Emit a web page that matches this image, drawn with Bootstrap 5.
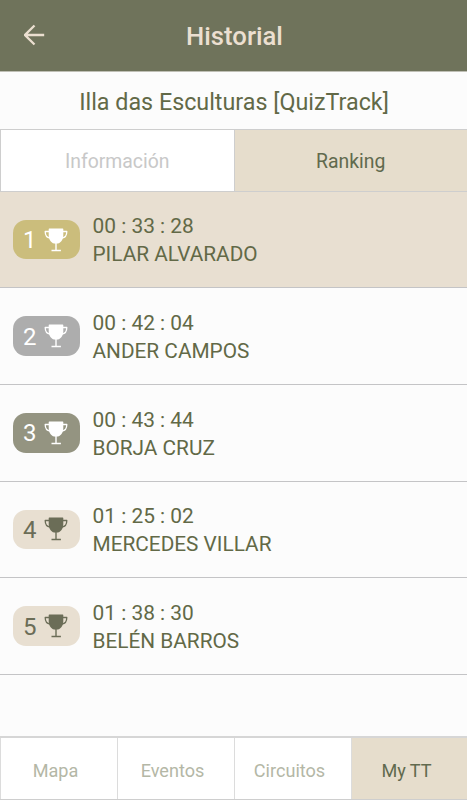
<!DOCTYPE html>
<html lang="es">
<head>
<meta charset="utf-8">
<meta name="viewport" content="width=device-width, initial-scale=1">
<title>Historial</title>
<link href="https://cdn.jsdelivr.net/npm/bootstrap@5.3.0/dist/css/bootstrap.min.css" rel="stylesheet">
<style>
:root{--olive:#6f735b;--ink:#626947}
body{font-family:Roboto,"Liberation Sans",sans-serif;font-weight:400;background:#fcfcfc;color:var(--ink);height:800px;overflow:hidden}
.topbar{height:72px;background:var(--olive);color:#ebdfd0;display:grid;grid-template-columns:68px 1fr 68px;border-bottom:1px solid #bfbfb5}
.topbar h1{font-size:25.700px;font-weight:500;line-height:30px;padding:1px 0 0 2px}
.topbar a{margin-top:-2px}
.route{height:57px;font-size:23.300px;line-height:30px;font-weight:400;padding:2px 0 0 1px}
.tabs{height:63px;border:1px solid #cecece;border-right:0;font-size:19.400px}
.tabs a,.bottom a{text-decoration:none}
.tabs a{color:#c8c8c8;background:#fff;padding-top:2px}
.tabs a+a{border-left:1px solid #cecece}
.tabs a.current,.bottom a.current{background:#e6ddcc;color:#616a4e}
.result{height:96.650px;flex-shrink:0;padding:0 13px;border:0;border-bottom:1px solid #c4c4c6!important;background:transparent;color:inherit;gap:13px}
.result.first{background:#e8dfd1;height:96.400px}
.place{width:66.500px;height:39.500px;border-radius:13px;font-size:24px;line-height:39px;padding:2px 12px 0 10px;background:#e8dfd1;color:#6b6d57}
.place svg{margin-top:-3px}
.gold{background:#cbbd7c;color:#fff}
.silver{background:#adadad;color:#fff}
.bronze{background:#949481;color:#fff}
.data{font-size:20.900px;line-height:28px;padding-top:1.500px}
.data .name{font-size:20.800px}
.bottom{height:64px;border-top:2px solid #d6d6d6;border-bottom:1px solid #cecece;font-size:18.100px}
.bottom a{color:#b4b7a6;background:#fff;border-left:1px solid #dcdcdc;padding:5px 7px 0 0}
.bottom a.current{padding-right:6px}
</style>
</head>
<body class="d-flex flex-column">
<svg class="d-none"><symbol id="cup" viewBox="0 0 24 25"><path fill="currentColor" d="M5.300 1.500h13.400Q19.300 1.500 19.300 2.200V8c0 5-2.800 8.800-7.300 8.800S4.700 13 4.700 8V2.200Q4.700 1.500 5.300 1.500zM11.300 16h1.400v7h-1.400zM7.500 22.800h9.400v1.500H7.500z"/><path fill="none" stroke="currentColor" stroke-width="1.300" stroke-linejoin="round" d="M5 4.500H1.200c0 3.500 1.600 6.100 4.800 6.500M19 4.500h3.800c0 3.500-1.600 6.100-4.800 6.500"/></symbol></svg>
<header class="topbar align-items-center flex-shrink-0">
<a href="#" class="ps-4 lh-1" aria-label="Volver"><svg width="22" height="22" viewBox="0 0 22 22" fill="none" stroke="#ebdfd0" stroke-width="2.300"><path d="M20.200 11H1.500M10.500 1.500 1 11l9.500 9.500"/></svg></a>
<h1 class="m-0 text-center">Historial</h1>
</header>
<h2 class="route m-0 d-flex align-items-center justify-content-center flex-shrink-0"><span>Illa das Esculturas [QuizTrack]</span></h2>
<nav class="tabs row g-0 flex-shrink-0">
<a class="col d-flex align-items-center justify-content-center" href="#"><span>Información</span></a>
<a class="current col d-flex align-items-center justify-content-center" href="#"><span>Ranking</span></a>
</nav>
<main class="list-group list-group-flush flex-grow-1">
<div class="list-group-item result first d-flex align-items-center"><div class="place gold d-flex justify-content-between align-items-center">1<svg width="24" height="25"><use href="#cup"/></svg></div><div class="data"><div class="time">00 : 33 : 28</div><div class="name">PILAR ALVARADO</div></div></div>
<div class="list-group-item result d-flex align-items-center"><div class="place silver d-flex justify-content-between align-items-center">2<svg width="24" height="25"><use href="#cup"/></svg></div><div class="data"><div class="time">00 : 42 : 04</div><div class="name">ANDER CAMPOS</div></div></div>
<div class="list-group-item result d-flex align-items-center"><div class="place bronze d-flex justify-content-between align-items-center">3<svg width="24" height="25"><use href="#cup"/></svg></div><div class="data"><div class="time">00 : 43 : 44</div><div class="name">BORJA CRUZ</div></div></div>
<div class="list-group-item result d-flex align-items-center"><div class="place d-flex justify-content-between align-items-center">4<svg width="24" height="25"><use href="#cup"/></svg></div><div class="data"><div class="time">01 : 25 : 02</div><div class="name">MERCEDES VILLAR</div></div></div>
<div class="list-group-item result d-flex align-items-center"><div class="place d-flex justify-content-between align-items-center">5<svg width="24" height="25"><use href="#cup"/></svg></div><div class="data"><div class="time">01 : 38 : 30</div><div class="name">BELÉN BARROS</div></div></div>
</main>
<nav class="bottom row g-0 flex-shrink-0">
<a class="col d-flex align-items-center justify-content-center" href="#">Mapa</a>
<a class="col d-flex align-items-center justify-content-center" href="#">Eventos</a>
<a class="col d-flex align-items-center justify-content-center" href="#">Circuitos</a>
<a class="current col d-flex align-items-center justify-content-center" href="#">My TT</a>
</nav>
<script src="https://cdn.jsdelivr.net/npm/bootstrap@5.3.0/dist/js/bootstrap.bundle.min.js"></script>
</body>
</html>
